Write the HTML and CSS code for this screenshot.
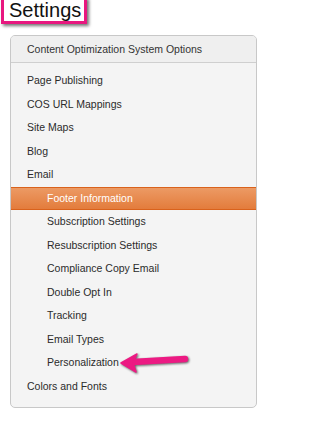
FILE: index.html
```html
<!DOCTYPE html>
<html>
<head>
<meta charset="utf-8">
<link rel="stylesheet" href="styles.css">
</head>
<body>
<h1 class="title">Settings</h1>
<div class="panel">
  <div class="panel-head">Content Optimization System Options</div>
  <ul class="menu">
    <li class="item">Page Publishing</li>
    <li class="item">COS URL Mappings</li>
    <li class="item">Site Maps</li>
    <li class="item">Blog</li>
    <li class="item">Email</li>
    <li class="item sub active">Footer Information</li>
    <li class="item sub">Subscription Settings</li>
    <li class="item sub">Resubscription Settings</li>
    <li class="item sub">Compliance Copy Email</li>
    <li class="item sub">Double Opt In</li>
    <li class="item sub">Tracking</li>
    <li class="item sub">Email Types</li>
    <li class="item sub marked">Personalization
      <svg class="arrow" width="72" height="24" viewBox="0 0 72 24">
        <line x1="14" y1="11" x2="66" y2="8" stroke="#ec1a83" stroke-width="6.5" stroke-linecap="round"/>
        <polygon points="2,12 18,3 14,11.5 17,21" fill="#ec1a83" stroke="#ec1a83" stroke-width="1.5" stroke-linejoin="round"/>
      </svg>
    </li>
    <li class="item">Colors and Fonts</li>
  </ul>
</div>
</body>
</html>
```

FILE: styles.css
```css
html, body {
  margin: 0;
  padding: 0;
  background: #ffffff;
}
body {
  font-family: "Liberation Sans", Arial, sans-serif;
  color: #2b2b2b;
}
.title {
  display: inline-block;
  margin: -3px 0 0 1px;
  padding: 0 3px 0 5px;
  border: 3px solid #e8177f;
  font-size: 20px;
  line-height: 21px;
  font-weight: normal;
  color: #111;
  box-shadow: 2px 2px 3px rgba(0, 0, 0, 0.55);
}
.panel {
  margin: 11px 0 0 10px;
  width: 245px;
  border: 1px solid #c8c8c8;
  border-radius: 5px;
  background: #f4f4f4;
  overflow: hidden;
}
.panel-head {
  height: 26px;
  line-height: 27px;
  padding-left: 16px;
  font-size: 10.5px;
  color: #333;
  background: #efefef;
  border-bottom: 1px solid #cfcfcf;
}
.menu {
  list-style: none;
  margin: 0;
  padding: 6px 0 9px 0;
}
.item {
  position: relative;
  height: 23.5px;
  line-height: 23.5px;
  padding-left: 16px;
  font-size: 10.5px;
  color: #2b2b2b;
  box-sizing: border-box;
}
.item.sub {
  padding-left: 36px;
}
.item.active {
  color: #ffffff;
  background: linear-gradient(#ec9a64, #e37c3c);
  border-top: 1px solid #d9621c;
  border-bottom: 1px solid #d9621c;
  line-height: 21.5px;
}
.arrow {
  position: absolute;
  left: 108px;
  top: 0px;
  filter: drop-shadow(1.5px 1.5px 1px rgba(0, 0, 0, 0.6));
}
```
